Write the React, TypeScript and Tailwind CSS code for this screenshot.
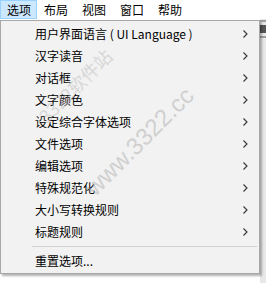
import React from "react";

const items = [
  "用户界面语言 ( UI Language )",
  "汉字读音",
  "对话框",
  "文字颜色",
  "设定综合字体选项",
  "文件选项",
  "编辑选项",
  "特殊规范化",
  "大小写转换规则",
  "标题规则",
];

const Chevron = () => (
  <svg width="5" height="8" viewBox="0 0 5 8" className="block">
    <path d="M0.5 0.5 L4 4 L0.5 7.5" fill="none" stroke="#333" strokeWidth="1.1" />
  </svg>
);

export default function App() {
  const font = { fontFamily: '"Noto Sans CJK SC", "Noto Sans", sans-serif' };
  return (
    <div className="relative w-[266px] h-[283px] bg-white overflow-hidden text-[12px] leading-none text-black" style={font}>
      {/* menu bar */}
      <div className="flex h-[19px] bg-white">
        {["选项", "布局", "视图", "窗口", "帮助"].map((t, i) => (
          <div
            key={t}
            className={
              i === 0
                ? "flex items-center w-[37px] h-[19px] pl-[6px] bg-[#cce8ff] border border-[#99d1ff]"
                : "flex items-center w-[38px] h-[19px] pl-[7px]"
            }
          >
            {t}
          </div>
        ))}
      </div>
      {/* background window edge at right */}
      <div className="absolute left-[260px] top-[19px] w-[6px] h-[264px] bg-[#e8e8e8] flex flex-col gap-[3px] pt-[1px]">
        <div className="h-[2px] bg-[#a0a0a0]" />
        <div className="h-[8px] bg-[#555]" />
        <div className="h-[2px] bg-[#a0a0a0]" />
      </div>
      {/* dropdown */}
      <div className="absolute left-0 top-[20px] w-[260px] h-[254px] bg-[#f2f2f2] border border-[#a8a8a8] shadow-[2px_2px_2px_rgba(0,0,0,0.3)] pt-[2px]">
        {items.map((t) => (
          <div key={t} className="flex items-center h-[22px] pl-[34px] pr-[11px] justify-between">
            <span className="whitespace-nowrap">{t}</span>
            <Chevron />
          </div>
        ))}
        <div className="ml-[31px] mr-[2px] mt-[3px] mb-[3px] h-px bg-[#d2d2d2]" />
        <div className="flex items-center h-[22px] pl-[34px]">重置选项...</div>
      </div>
      {/* watermark */}
      <div
        className="absolute left-[98px] top-[176px] h-[24px] -rotate-45 origin-bottom-left text-[24px] leading-none text-[#b0b0b0] opacity-50 whitespace-nowrap pointer-events-none select-none"
        style={{ fontFamily: '"Liberation Sans", sans-serif' }}
      >
        www.3322.cc
      </div>
      <div className="absolute left-[48px] top-[107px] h-[18px] -rotate-45 origin-bottom-left text-[18px] leading-none text-[#b0b0b0] opacity-40 whitespace-nowrap pointer-events-none select-none">
        3322软件站
      </div>
    </div>
  );
}
